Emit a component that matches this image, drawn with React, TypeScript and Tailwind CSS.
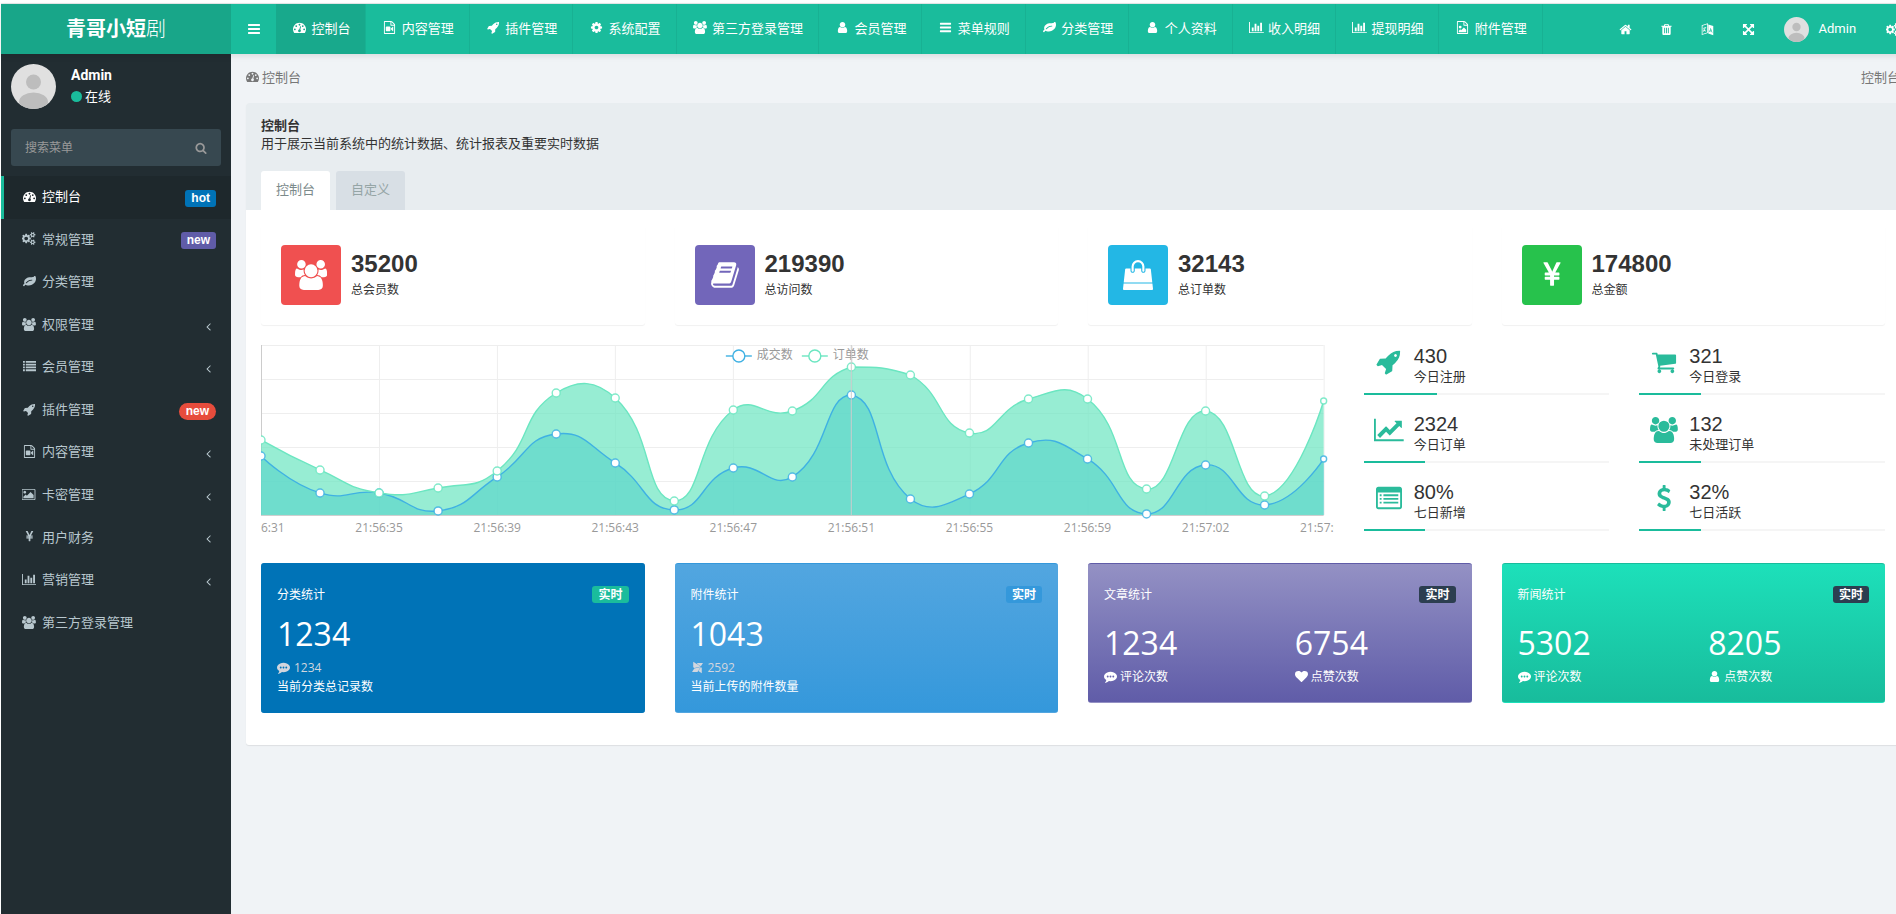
import React, { useState } from "react"
import { FaModx } from "react-icons/fa"

type Shape = { d: string; w?: number }

const barRow = "v128q0 26-19 45t-45 19h-1408q-26 0-45-19t-19-45v-128q0-26 19-45t45-19h1408q26 0 45 19t19 45z"
const dot = "q0-53-37.5-90.5t-90.5-37.5-90.5 37.5-37.5 90.5 37.5 90.5 90.5 37.5 90.5-37.5 37.5-90.5z"
const trashSlot = "v-704q0-14-9-23t-23-9h-64q-14 0-23 9t-9 23v704q0 14 9 23t23 9h64q14 0 23-9t9-23z"
const filePage =
  "M1596 380q28 28 48 76t20 88v1152q0 40-28 68t-68 28h-1344q-40 0-68-28t-28-68v-1600q0-40 28-68t68-28h896q40 0 88 20t76 48zm-444-244v376h376q-10-29-22-41l-313-313q-12-12-41-22zm384 1528v-1024h-416q-40 0-68-28t-28-68v-416h-768v1536h1280z"
const smallGear =
  "v140q0 16-149 31-12 27-30 52 51 113 51 138 0 4-4 7-122 71-124 71-8 0-46-47t-52-68q-20 2-30 2t-30-2q-14 21-52 68t-46 47q-2 0-124-71-4-3-4-7 0-25 51-138-18-25-30-52-149-15-149-31v-140q0-16 149-31 13-29 30-52-51-113-51-138 0-4 4-7 4-2 35-20t59-34 30-16q8 0 46 46.5t52 67.5q20-2 30-2t30 2q51-71 92-112l6-2q4 0 124 70 4 3 4 7 0 25-51 138 17 23 30 52 149 15 149 31z"

const icons = {
  dashboard: {
    d: `M384 1152${dot}M576 704${dot}M1004 1185l101-382q6-26-7.5-48.5t-38.5-29.5-48 6.5-30 39.5l-101 382q-60 5-107 43.5t-63 98.5q-20 77 20 146t117 89 146-20 89-117q16-60-6-117t-72-91zM1664 1152${dot}M1024 512${dot}M1472 704${dot}M1792 1152q0 261-141 483-19 29-54 29h-1402q-35 0-54-29-141-221-141-483 0-182 71-348t191-286 286-191 348-71 348 71 286 191 191 286 71 348z`,
  },
  group: {
    w: 1920,
    d: "M593 896q-162 5-265 128h-134q-82 0-138-40.5t-56-118.5q0-353 124-353 6 0 43.5 21t97.5 42.5 119 21.5q67 0 133-23-5 37-5 66 0 139 81 256zm1071 637q0 120-73 189.5t-194 69.5h-874q-121 0-194-69.5t-73-189.5q0-53 3.5-103.5t14-109 26.5-108.5 43-97.5 62-81 85.5-53.5 111.5-20q10 0 43 21.5t73 48 107 48 135 21.5 135-21.5 107-48 73-48 43-21.5q61 0 111.5 20t85.5 53.5 62 81 43 97.5 26.5 108.5 14 109 3.5 103.5zm-1024-1277q0 106-75 181t-181 75-181-75-75-181 75-181 181-75 181 75 75 181zm704 384q0 159-112.5 271.5t-271.5 112.5-271.5-112.5-112.5-271.5 112.5-271.5 271.5-112.5 271.5 112.5 112.5 271.5zm576 225q0 78-56 118.5t-138 40.5h-134q-103-123-265-128 81-117 81-256 0-29-5-66 66 23 133 23 59 0 119-21.5t97.5-42.5 43.5-21q124 0 124 353zm-128-609q0 106-75 181t-181 75-181-75-75-181 75-181 181-75 181 75 75 181z",
  },
  rocket: {
    d: "M1440 448q0-40-28-68t-68-28-68 28-28 68 28 68 68 28 68-28 28-68zm224-288q0 249-75.5 430.5t-253.5 360.5q-81 80-195 176l-20 379q-2 16-16 26l-384 224q-7 4-16 4-12 0-23-9l-64-64q-13-14-8-32l85-276-281-281-276 85q-3 1-9 1-14 0-23-9l-64-64q-17-19-5-39l224-384q10-14 26-16l379-20q96-114 176-195 188-187 358-258t431-71q14 0 24 9.5t10 22.5z",
  },
  user: {
    d: "M1536 1399q0 109-62.5 187t-150.5 78h-854q-88 0-150.5-78t-62.5-187q0-85 8.5-160.5t31.5-152 58.5-131 94-89 134.5-34.5q131 128 313 128t313-128q76 0 134.5 34.5t94 89 58.5 131 31.5 152 8.5 160.5zm-256-887q0 159-112.5 271.5t-271.5 112.5-271.5-112.5-112.5-271.5 112.5-271.5 271.5-112.5 271.5 112.5 112.5 271.5z",
  },
  bars: { d: `M1664 1344${barRow}M1664 832${barRow}M1664 320${barRow}` },
  list: {
    d: "M0 128h256v256h-256zM384 128h1408v256h-1408zM0 512h256v256h-256zM384 512h1408v256h-1408zM0 896h256v256h-256zM384 896h1408v256h-1408zM0 1280h256v256h-256zM384 1280h1408v256h-1408z",
  },
  listAlt: {
    d: "M160 128h1472q66 0 113 47t47 113v1216q0 66-47 113t-113 47h-1472q-66 0-113-47t-47-113v-1216q0-66 47-113t113-47zM128 512v992q0 32 32 32h1472q32 0 32-32v-992zM256 640h128v128h-128zM512 640h1024v128h-1024zM256 896h128v128h-128zM512 896h1024v128h-1024zM256 1152h128v128h-128zM512 1152h1024v128h-1024z",
  },
  leaf: {
    d: "M1280 704q0-26-19-45t-45-19q-172 0-318 49.5t-259.5 134-235.5 219.5q-19 21-19 45 0 26 19 45t45 19q24 0 45-19 27-24 74-71t67-66q137-124 268.5-176t313.5-52q26 0 45-19t19-45zm512-198q0 95-20 193-46 224-184.5 383t-357.5 268q-214 108-438 108-148 0-286-47-15-5-88-42t-96-37q-16 0-39.5 32t-45 70-52.5 70-60 32q-43 0-63.5-17.5t-45.5-59.5q-2-4-6-11t-5.5-10-3-9.5-1.5-13.5q0-35 31-73.5t68-65.5 68-56 31-48q0-4-14-38t-16-44q-9-51-9-104 0-115 43.5-220t119-184.5 170.5-139 204-95.5q55-18 145-25.5t179.5-9 178.5-6 163.5-24 113.5-56.5l29.5-29.5 29.5-28 27-20 36.5-16 43.5-4.5q39 0 70.5 46t47.5 112 24 124 8 96z",
  },
  cog: {
    d: "M1152 896q0-106-75-181t-181-75-181 75-75 181 75 181 181 75 181-75 75-181zm512-109v222q0 12-8 23t-20 13l-185 28q-19 54-39 91 35 50 107 138 10 12 10 25t-9 23q-27 37-99 108t-94 71q-12 0-26-9l-138-108q-44 23-91 38-16 136-29 186-7 28-36 28h-222q-14 0-24.5-8.5t-11.5-21.5l-28-184q-49-16-90-37l-141 107q-10 9-25 9-14 0-25-11-126-114-165-168-7-10-7-23 0-12 8-23 15-21 51-66.5t54-70.5q-27-50-41-99l-183-27q-13-2-21-12.5t-8-23.5v-222q0-12 8-23t19-13l186-28q14-46 39-92-40-57-107-138-10-12-10-24 0-10 9-23 26-36 98.5-107.5t94.5-71.5q13 0 26 10l138 107q44-23 91-38 16-136 29-186 7-28 36-28h222q14 0 24.5 8.5t11.5 21.5l28 184q49 16 90 37l142-107q9-9 24-9 13 0 25 10 129 119 165 170 7 8 7 22 0 12-8 23-15 21-51 66.5t-54 70.5q26 50 41 98l183 28q13 2 21 12.5t8 23.5z",
  },
  cogs: {
    w: 1920,
    d: `M832 896q0-106-75-181t-181-75-181 75-75 181 75 181 181 75 181-75 75-181zM1600 1408q0-52-38-90t-90-38-90 38-38 90q0 53 37.5 90.5t90.5 37.5 90.5-37.5 37.5-90.5zM1600 384q0-52-38-90t-90-38-90 38-38 90q0 53 37.5 90.5t90.5 37.5 90.5-37.5 37.5-90.5zM1216 805v185q0 10-7 19.5t-16 10.5l-155 24q-11 35-32 76 34 48 90 115 7 11 7 20 0 12-7 19-23 30-82.5 89.5t-78.5 59.5q-11 0-21-7l-115-90q-37 19-77 31-11 108-23 155-7 24-30 24h-186q-11 0-20-7.5t-10-17.5l-23-153q-34-10-75-31l-118 89q-7 7-20 7-11 0-21-8-144-133-144-160 0-9 7-19 10-14 41-53t47-61q-23-44-35-82l-152-24q-10-1-17-9.5t-7-19.5v-185q0-10 7-19.5t16-10.5l155-24q11-35 32-76-34-48-90-115-7-11-7-20 0-12 7-20 22-30 82-89t79-59q11 0 21 7l115 90q34-18 77-32 11-108 23-154 7-24 30-24h186q11 0 20 7.5t10 17.5l23 153q34 10 75 31l118-89q8-7 20-7 11 0 21 8 144 133 144 160 0 8-7 19-12 16-42 54t-45 60q23 48 34 82l152 23q10 2 17 10.5t7 19.5zM1856 1338${smallGear}M1856 314${smallGear}`,
  },
  barChart: {
    w: 2048,
    d: "M640 896v512h-256v-512h256zm384-512v1024h-256v-1024h256zm1024 1152v128h-2048v-1536h128v1408h1920zm-640-896v768h-256v-768h256zm384-384v1152h-256v-1152h256z",
  },
  lineChart: {
    w: 2048,
    d: "M2048 1536v128h-2048v-1536h128v1408h1920zm-128-1248v435q0 21-19.5 29.5t-35.5-7.5l-121-121-633 633q-10 10-23 10t-23-10l-233-233-416 416-192-192 585-585q10-10 23-10t23 10l233 233 464-464-121-121q-16-16-7.5-35.5t29.5-19.5h435q14 0 23 9t9 23z",
  },
  cart: {
    d: "M704 1536q0 52-38 90t-90 38-90-38-38-90 38-90 90-38 90 38 38 90zm896 0q0 52-38 90t-90 38-90-38-38-90 38-90 90-38 90 38 38 90zm128-1088v512q0 24-16.5 42.5t-40.5 21.5l-1044 122q13 60 13 70 0 16-24 64h920q26 0 45 19t19 45-19 45-45 19h-1024q-26 0-45-19t-19-45q0-11 8-31.5t16-36 21.5-40 15.5-29.5l-177-823h-204q-26 0-45-19t-19-45 19-45 45-19h256q16 0 28.5 6.5t19.5 15.5 13 24.5 8 26 5.5 29.5 4.5 26h1201q26 0 45 19t19 45z",
  },
  commenting: {
    d: `M640 896${dot}M1024 896${dot}M1408 896${dot}M1792 896q0 174-120 321.5t-326 233-450 85.5q-110 0-211-18-173 173-435 229-52 10-86 13-12 1-22-6t-13-18q-4-15 20-37 5-5 23.5-21.5t25.5-23.5 23.5-25.5 24-31.5 20.5-37 20-48 14.5-57.5 12.5-72.5q-146-90-229.5-216.5t-83.5-269.5q0-174 120-321.5t326-233 450-85.5 450 85.5 326 233 120 321.5z`,
  },
  heart: {
    d: "M896 1664q-26 0-44-18l-624-602q-10-8-27.5-26t-55.5-65.5-68-97.5-53.5-121-23.5-138q0-220 127-344t351-124q62 0 126.5 21.5t120 58 95.5 68.5 76 68q36-36 76-68t95.5-68.5 120-58 126.5-21.5q224 0 351 124t127 344q0 221-229 450l-623 600q-18 18-44 18z",
  },
  search: {
    d: "M1216 832q0-185-131.5-316.5t-316.5-131.5-316.5 131.5-131.5 316.5 131.5 316.5 316.5 131.5 316.5-131.5 131.5-316.5zm512 832q0 52-38 90t-90 38q-54 0-90-38l-343-342q-179 124-399 124-143 0-273.5-55.5t-225-150-150-225-55.5-273.5 55.5-273.5 150-225 225-150 273.5-55.5 273.5 55.5 225 150 150 225 55.5 273.5q0 220-124 399l343 343q37 37 37 90z",
  },
  home: {
    d: "M1472 992v480q0 26-19 45t-45 19h-384v-384h-256v384h-384q-26 0-45-19t-19-45v-480q0-1 .5-3t.5-3l575-474 575 474q1 2 1 6zm223-69l-62 74q-8 9-21 11h-3q-13 0-21-7l-692-577-692 577q-12 8-24 7-13-2-21-11l-62-74q-8-10-7-23.5t11-21.5l719-599q32-26 76-26t76 26l244 204v-195q0-14 9-23t23-9h192q14 0 23 9t9 23v408l219 182q10 8 11 21.5t-7 23.5z",
  },
  trash: {
    d: `M704 1376${trashSlot}M960 1376${trashSlot}M1216 1376${trashSlot}M672 384h448l-48-117q-7-9-17-11h-317q-10 2-17 11zM1600 416v64q0 14-9 23t-23 9h-96v948q0 83-47 143.5t-113 60.5h-832q-66 0-113-58.5t-47-141.5v-952h-96q-14 0-23-9t-9-23v-64q0-14 9-23t23-9h309l70-167q15-37 54-63t79-26h320q40 0 79 26t54 63l70 167h309q14 0 23 9t9 23z`,
  },
  language: {
    d: "M100 300l850-280v1360l-850 290zM210 390v1130l630-215v-1130zM1000 190l690 230v1270l-690-250zM290 700l420-140v110l-90 30q-10 160-110 290l190 70v120l-270-90-110 120-60-80 90-90-70-120 90-30 50 80q80-120 90-240l-220 75zM1330 640l-190 560 90 30 40-110 190 60 40 130 90 30zM1330 830l80 250-110-35z",
  },
  expand: {
    d: "M1411 541l-355 355 355 355 144-144q29-31 70-14 39 17 39 59v448q0 26-19 45t-45 19h-448q-42 0-59-40-17-39 14-69l144-144-355-355-355 355 144 144q31 30 14 69-17 40-59 40h-448q-26 0-45-19t-19-45v-448q0-42 40-59 39-17 69 14l144 144 355-355-355-355-144 144q-19 19-45 19-12 0-24-5-40-17-40-59v-448q0-26 19-45t45-19h448q42 0 59 40 17 39-14 69l-144 144 355 355 355-355-144-144q-31-30-14-69 17-40 59-40h448q26 0 45 19t19 45v448q0 42-39 59-13 5-25 5-26 0-45-19z",
  },
  yen: {
    d: "M985.5 1536h-172q-13 0-22.5-9t-9.5-23v-330h-288q-13 0-22.5-9t-9.5-23v-103q0-13 9.5-22.5t22.5-9.5h288v-85h-288q-13 0-22.5-9t-9.5-23v-104q0-13 9.5-22.5t22.5-9.5h214l-321-578q-8-16 0-32 10-16 28-16h194q19 0 29 18l215 425q19 38 56 125 10-24 30.5-68t27.5-61l191-420q8-19 29-19h191q17 0 27 16 9 14 1 31l-313 579h215q13 0 22.5 9.5t9.5 22.5v104q0 14-9.5 23t-22.5 9h-290v85h290q13 0 22.5 9.5t9.5 22.5v103q0 14-9.5 23t-22.5 9h-290v330q0 13-9.5 22.5t-22.5 9.5z",
  },
  dollar: {
    d: "M1362 1185q0 153-99.5 263.5t-258.5 136.5v175q0 14-9 23t-23 9h-135q-13 0-22.5-9.5t-9.5-22.5v-175q-66-9-127.5-31t-101.5-44.5-74-48-46.5-37.5-17.5-18q-17-21-2-41l103-135q7-10 23-12 15-2 24 9l2 2q113 99 243 125 37 8 74 8 81 0 142.5-43t61.5-122q0-28-15-53t-33.5-42-58.5-37.5-66-32-80-32.5q-39-16-61.5-25t-61.5-26.5-62.5-31-56.5-35.5-53.5-42.5-43.5-49-35.5-58-21-66.5-8.5-78q0-138 98-242t255-134v-180q0-13 9.5-22.5t22.5-9.5h135q14 0 23 9t9 23v176q57 6 110.5 23t87 33.5 63.5 37.5 39 29 15 14q17 18 5 38l-81 146q-8 15-23 16-14 3-27-7-3-3-14.5-12t-39-26.5-58.5-32-74.5-26-85.5-11.5q-95 0-155 43t-60 111q0 26 8.5 48t29.5 41.5 39.5 33 56 31 60.5 27 70 27.5q53 20 81 31.5t76 35 75.5 42.5 62 50 53 63.5 31.5 76.5 13 94z",
  },
  bag: {
    d: "M1757 1408l35 313q3 28-16 50-19 21-48 21h-1664q-29 0-48-21-19-22-16-50l35-313h1722zm-93-839l86 775h-1708l86-775q3-24 21-40.5t43-16.5h256v128q0 53 37.5 90.5t90.5 37.5 90.5-37.5 37.5-90.5v-128h384v128q0 53 37.5 90.5t90.5 37.5 90.5-37.5 37.5-90.5v-128h256q25 0 43 16.5t21 40.5zm-384-185v256q0 26-19 45t-45 19-45-19-19-45v-256q0-106-75-181t-181-75-181 75-75 181v256q0 26-19 45t-45 19-45-19-19-45v-256q0-159 112.5-271.5t271.5-112.5 271.5 112.5 112.5 271.5z",
  },
  book: {
    d: "M1703 478q40 57 18 129l-275 906q-19 64-76.5 107.5t-122.5 43.5h-923q-77 0-148.5-53.5t-99.5-131.5q-24-67-2-127 0-4 3-27t4-37q1-8-3-21.5t-3-19.5q2-11 8-21t16.5-23.5 16.5-23.5q23-38 45-91.5t30-91.5q3-10 .5-30t-.5-28q3-11 17-28t17-23q21-36 42-92t25-90q1-9-2.5-32t.5-28q4-13 22-30.5t22-22.5q19-26 42.5-84.5t27.5-96.5q1-8-3-25.5t-2-26.5q2-8 9-18t18-23 17-21q8-12 16.5-30.5t15-35 16-36 19.5-32 26.5-23.5 36-11.5 47.5 5.5l-1 3q38-9 51-9h761q74 0 114 56t18 130l-274 906q-36 119-71.5 153.5t-128.5 34.5h-869q-27 0-38 15-11 16-1 43 24 70 144 70h923q29 0 56-15.5t35-41.5l300-987q7-22 5-57 38 15 59 43zm-1064 2q-4 13 2 22.5t20 9.5h608q13 0 25.5-9.5t16.5-22.5l21-64q4-13-2-22.5t-20-9.5h-608q-13 0-25.5 9.5t-16.5 22.5zm-83 256q-4 13 2 22.5t20 9.5h608q13 0 25.5-9.5t16.5-22.5l21-64q4-13-2-22.5t-20-9.5h-608q-13 0-25.5 9.5t-16.5 22.5z",
  },
  angleLeft: {
    d: "M1203 544q0 13-10 23l-393 393 393 393q10 10 10 23t-10 23l-50 50q-10 10-23 10t-23-10l-466-466q-10-10-10-23t10-23l466-466q10-10 23-10t23 10l50 50q10 10 10 23z",
  },
  picture: {
    w: 1920,
    d: "M576 576q0 80-56 136t-136 56-136-56-56-136 56-136 136-56 136 56 56 136zm1024 384v448h-1408v-192l320-320 160 160 512-512zm96-704h-1600q-13 0-22.5 9.5t-9.5 22.5v1216q0 13 9.5 22.5t22.5 9.5h1600q13 0 22.5-9.5t9.5-22.5v-1216q0-13-9.5-22.5t-22.5-9.5zm160 32v1216q0 66-47 113t-113 47h-1600q-66 0-113-47t-47-113v-1216q0-66 47-113t113-47h1600q66 0 113 47t47 113z",
  },
  fileImage: {
    d: `${filePage}M1408 1216v320h-1024v-192l192-192 128 128 384-384zM576 1024q-80 0-136-56t-56-136 56-136 136-56 136 56 56 136-56 136-136 56z`,
  },
  fileVideo: {
    d: `${filePage}M896 768q52 0 90 38t38 90v384q0 52-38 90t-90 38h-384q-52 0-90-38t-38-90v-384q0-52 38-90t90-38h384zM1388 770q20 8 20 30v576q0 22-20 30-8 2-12 2-14 0-23-9l-265-266v-90l265-266q9-9 23-9 4 0 12 2z`,
  },
} satisfies Record<string, Shape>

type IconName = keyof typeof icons

function Icon({ name, className = "h-[13px]" }: { name: IconName; className?: string }) {
  const shape: Shape = icons[name]
  return (
    <svg viewBox={`0 0 ${shape.w ?? 1792} 1792`} className={`${className} w-auto shrink-0`} fill="currentColor" fillRule="evenodd" aria-hidden="true">
      <path d={shape.d} />
    </svg>
  )
}

function Avatar({ className }: { className: string }) {
  return (
    <svg viewBox="0 0 45 45" className={`${className} shrink-0 rounded-full`} aria-hidden="true">
      <rect width="45" height="45" fill="#e0e0e0" />
      <circle cx="22.5" cy="18" r="7.5" fill="#bdbdbd" />
      <ellipse cx="22.5" cy="38" rx="14.5" ry="9.5" fill="#bdbdbd" />
    </svg>
  )
}

const navItems: { icon: IconName; label: string }[] = [
  { icon: "dashboard", label: "控制台" },
  { icon: "fileVideo", label: "内容管理" },
  { icon: "rocket", label: "插件管理" },
  { icon: "cog", label: "系统配置" },
  { icon: "group", label: "第三方登录管理" },
  { icon: "user", label: "会员管理" },
  { icon: "bars", label: "菜单规则" },
  { icon: "leaf", label: "分类管理" },
  { icon: "user", label: "个人资料" },
  { icon: "barChart", label: "收入明细" },
  { icon: "barChart", label: "提现明细" },
  { icon: "fileImage", label: "附件管理" },
]

const menuItems: { icon: IconName; label: string; badge?: string; badgeClass?: string; arrow?: boolean }[] = [
  { icon: "dashboard", label: "控制台", badge: "hot", badgeClass: "rounded-[3px] bg-[#0073b7] px-[6px]" },
  { icon: "cogs", label: "常规管理", badge: "new", badgeClass: "rounded-[3px] bg-[#605ca8] px-[6px]" },
  { icon: "leaf", label: "分类管理" },
  { icon: "group", label: "权限管理", arrow: true },
  { icon: "list", label: "会员管理", arrow: true },
  { icon: "rocket", label: "插件管理", badge: "new", badgeClass: "rounded-full bg-[#e74c3c] px-[7px]" },
  { icon: "fileVideo", label: "内容管理", arrow: true },
  { icon: "picture", label: "卡密管理", arrow: true },
  { icon: "yen", label: "用户财务", arrow: true },
  { icon: "barChart", label: "营销管理", arrow: true },
  { icon: "group", label: "第三方登录管理" },
]

const tools: { icon: IconName; title: string }[] = [
  { icon: "home", title: "主页" },
  { icon: "trash", title: "清除缓存" },
  { icon: "language", title: "语言" },
  { icon: "expand", title: "全屏" },
]

const stats: { icon: IconName; value: string; label: string; color: string }[] = [
  { icon: "group", value: "35200", label: "总会员数", color: "bg-[#f05050]" },
  { icon: "book", value: "219390", label: "总访问数", color: "bg-[#7266ba]" },
  { icon: "bag", value: "32143", label: "总订单数", color: "bg-[#23b7e5]" },
  { icon: "yen", value: "174800", label: "总金额", color: "bg-[#27c24c]" },
]

const miniStats: { icon: IconName; value: string; label: string; percent: number }[] = [
  { icon: "rocket", value: "430", label: "今日注册", percent: 30 },
  { icon: "cart", value: "321", label: "今日登录", percent: 25 },
  { icon: "lineChart", value: "2324", label: "今日订单", percent: 25 },
  { icon: "group", value: "132", label: "未处理订单", percent: 25 },
  { icon: "listAlt", value: "80%", label: "七日新增", percent: 25 },
  { icon: "dollar", value: "32%", label: "七日活跃", percent: 25 },
]

const times = ["21:56:31", "21:56:35", "21:56:39", "21:56:43", "21:56:47", "21:56:51", "21:56:55", "21:56:59", "21:57:02", "21:57:06"]

// distance from the top of the plot, one entry per sample
const orders = [95, 125, 148, 143, 126, 48, 53, 156, 65, 66, 22, 30, 88, 54, 54, 144, 66, 151, 56]
const deals = [111, 148, 148, 166, 132, 89, 118, 165, 123, 132, 50, 154, 149, 98, 114, 169, 120, 160, 114]

const STEP = 1063 / 18
const BOTTOM = 170

function smoothPath(values: number[]) {
  const pts = values.map((y, i) => [i * STEP, y])
  const top = Math.min(...values)
  const low = Math.max(...values)
  const clamp = (y: number) => Math.max(top, Math.min(low, y))
  let d = `M${pts[0][0]} ${pts[0][1]}`
  let cp0 = pts[0]
  for (let i = 1; i < pts.length; i++) {
    const [x, y] = pts[i]
    const prev = pts[i - 1]
    const next = pts[i + 1]
    let cp1 = [x, y]
    let after = [x, y]
    if (next) {
      const lenPrev = Math.hypot(x - prev[0], y - prev[1])
      const lenNext = Math.hypot(next[0] - x, next[1] - y)
      const ratio = lenNext / (lenNext + lenPrev)
      const vx = next[0] - prev[0]
      const vy = next[1] - prev[1]
      cp1 = [x - vx * 0.5 * (1 - ratio), clamp(y - vy * 0.5 * (1 - ratio))]
      after = [x + vx * 0.5 * ratio, clamp(y + vy * 0.5 * ratio)]
    }
    d += `C${cp0[0]} ${cp0[1]} ${cp1[0]} ${cp1[1]} ${x} ${y}`
    cp0 = after
  }
  return d
}

const series = [
  { name: "成交数", values: deals, color: "#3fb1e3", legendX: 478 },
  { name: "订单数", values: orders, color: "#6be6c1", legendX: 554 },
]

function OrderChart() {
  return (
    <svg viewBox="0 0 1073 190" className="block w-full text-[12px]" fontFamily='"Open Sans", "Noto Sans CJK SC", sans-serif' role="img" aria-label="成交数 订单数">
      <g stroke="#eee">
        {[0, 1, 2, 3, 4].map((i) => (
          <line key={i} x1="0" x2="1063" y1={i * 34 + 0.5} y2={i * 34 + 0.5} />
        ))}
        {times.map((t, i) => (
          <line key={t} x1={Math.round(i * 2 * STEP) + 0.5} x2={Math.round(i * 2 * STEP) + 0.5} y1="0" y2={BOTTOM} />
        ))}
      </g>
      <line x1="0.5" x2="0.5" y1="0" y2={BOTTOM} stroke="#ccc" />
      {series.map((s) => (
        <path key={s.name} d={`${smoothPath(s.values)}L1063 ${BOTTOM}L0 ${BOTTOM}Z`} fill={s.color} fillOpacity="0.7" />
      ))}
      <line x1="0" x2="1063" y1={BOTTOM + 0.5} y2={BOTTOM + 0.5} stroke="#ccc" />
      {series.map((s) => (
        <g key={s.name} stroke={s.color} strokeWidth="1.4">
          <path d={smoothPath(s.values)} fill="none" />
          {s.values.map((y, i) => (
            <circle key={i} cx={i * STEP} cy={y} r={i === 18 ? 3 : 4} fill="#fff" strokeOpacity="0.85" />
          ))}
        </g>
      ))}
      {series.map((s) => (
        <g key={s.name}>
          <line x1={s.legendX - 13} x2={s.legendX + 13} y1="11" y2="11" stroke={s.color} strokeWidth="1.4" />
          <circle cx={s.legendX} cy="11" r="6" fill="#fff" stroke={s.color} strokeWidth="1.4" />
          <text x={s.legendX + 18} y="14" fill="#999">
            {s.name}
          </text>
        </g>
      ))}
      <line x1="590.5" x2="590.5" y1="0" y2={BOTTOM} stroke="#ccc" />
      {times.map((t, i) => (
        <text key={t} x={i * 2 * STEP} y="187" fill="#999" textAnchor="middle">
          {t}
        </text>
      ))}
    </svg>
  )
}

function StatCard({ title, tagClass, className, children }: { title: string; tagClass: string; className: string; children: React.ReactNode }) {
  return (
    <section className={`rounded-[3px] border-y px-4 text-white ${className}`}>
      <div className="flex items-center justify-between pt-[22px]">
        <h5 className="text-xs leading-[17px]">{title}</h5>
        <span className={`rounded-[3px] px-[6px] text-xs leading-[17px] font-bold ${tagClass}`}>实时</span>
      </div>
      {children}
    </section>
  )
}

function Pair({ value, icon, label }: { value: string; icon: IconName; label: string }) {
  return (
    <div>
      <div className="text-[32px] leading-[40px]">{value}</div>
      <div className="mt-[5px] flex items-center gap-[3px] text-xs leading-[17px]">
        <Icon name={icon} />
        {label}
      </div>
    </div>
  )
}

export default function App() {
  const [keyword, setKeyword] = useState<string>("")
  const [tab, setTab] = useState<number>(0)

  return (
    <div className="min-h-screen overflow-hidden bg-white pt-[3px] pl-px font-['Open_Sans','Noto_Sans_CJK_SC',sans-serif] text-[13px] leading-[18px] text-[#333]">
      <div className="-mr-[19px] flex min-h-[calc(100vh-3px)] flex-col border-t border-[#e6e9ea]">
        {/* Top bar */}
        <header className="relative flex h-[50px] shrink-0 bg-[#1abc9c] text-white shadow-[0_2px_6px_rgba(0,0,0,0.1)]">
          <a href="#" className="flex w-[230px] items-center justify-center bg-[#18a689] text-xl">
            <b>青哥小短</b>
            <span className="font-light">剧</span>
          </a>
          <button type="button" aria-label="切换菜单" className="flex w-[45px] items-center justify-center">
            <Icon name="bars" className="h-[14px]" />
          </button>
          <nav className="flex">
            {navItems.map((item, idx) => (
              <a
                key={item.label}
                href="#"
                className={`flex items-center border-r border-[#18b193] px-[15px] pb-[3px] whitespace-nowrap ${idx === 0 ? "bg-[#18a98c]" : ""}`}
              >
                <span className="flex w-[17px] justify-center">
                  <Icon name={item.icon} />
                </span>
                <span>&nbsp;{item.label}</span>
              </a>
            ))}
          </nav>
          <div className="ml-auto flex">
            {tools.map((tool) => (
              <button key={tool.icon} type="button" aria-label={tool.title} className="flex w-[41px] items-center justify-center">
                <Icon name={tool.icon} />
              </button>
            ))}
            <a href="#" className="flex items-center gap-[10px] px-[15px] font-['Roboto',sans-serif]">
              <Avatar className="size-[25px]" />
              Admin
            </a>
            <button type="button" aria-label="设置" className="flex items-center px-[15px]">
              <Icon name="cogs" />
            </button>
          </div>
        </header>

        <div className="flex flex-1">
          {/* Sidebar */}
          <aside className="w-[230px] shrink-0 bg-[#222d32]">
            <div className="flex gap-[15px] p-[10px] text-white">
              <Avatar className="size-[45px]" />
              <div>
                <p className="mt-[2px] font-['Roboto',sans-serif] text-sm leading-[18px] font-bold">Admin</p>
                <a href="#" className="mt-[3px] flex items-center gap-[3px]">
                  <span className="size-[11px] rounded-full bg-[#1abc9c]" />
                  在线
                </a>
              </div>
            </div>
            <form className="m-[10px] flex h-[37px] items-center rounded-[3px] bg-[#374850] px-[14px] text-[#999]" onSubmit={(e) => e.preventDefault()}>
              <input
                type="text"
                aria-label="搜索菜单"
                placeholder="搜索菜单"
                value={keyword}
                onChange={(e) => setKeyword(e.target.value)}
                className="min-w-0 flex-1 bg-transparent text-xs outline-none placeholder:text-[#999]"
              />
              <button type="submit" aria-label="搜索">
                <Icon name="search" className="h-[12px]" />
              </button>
            </form>
            <nav className="leading-[1.43] text-[#b8c7ce]">
              {menuItems.map((item, idx) => (
                <a
                  key={item.label}
                  href="#"
                  className={`flex items-center border-l-[3px] px-[15px] pt-[11px] pb-[13px] ${idx === 0 ? "border-[#1abc9c] bg-[#1e282c] text-white" : "border-transparent"}`}
                >
                  <span className="mr-[3px] flex w-5 justify-center">
                    <Icon name={item.icon} />
                  </span>
                  {item.label}
                  {item.badge && (
                    <span className={`mt-0.5 -mb-0.5 ml-auto font-['Liberation_Sans',sans-serif] text-xs leading-[17px] font-bold text-white ${item.badgeClass}`}>
                      {item.badge}
                    </span>
                  )}
                  {item.arrow && (
                    <span className="mt-1 ml-auto flex w-[15px] justify-center">
                      <Icon name="angleLeft" />
                    </span>
                  )}
                </a>
              ))}
            </nav>
          </aside>

          {/* Content */}
          <div className="min-w-0 flex-1 bg-[#f0f3f6]">
            <div className="flex h-[49px] items-center justify-between px-[15px] pb-[4px] text-[#777]">
              <a href="#" className="flex items-center gap-[3px]">
                <Icon name="dashboard" />
                控制台
              </a>
              <span>控制台</span>
            </div>

            <main className="mx-[15px] rounded-[3px] bg-white shadow-[0_1px_1px_rgba(0,0,0,0.08)]">
              <div className="rounded-t-[3px] bg-[#e8edf0] px-[15px] pt-[13px]">
                <h1 className="font-bold">控制台</h1>
                <p>用于展示当前系统中的统计数据、统计报表及重要实时数据</p>
                <div className="mt-[19px] flex gap-[6px]">
                  {["控制台", "自定义"].map((name, idx) => (
                    <button
                      key={name}
                      type="button"
                      onClick={() => setTab(idx)}
                      className={`h-[39px] rounded-t-[3px] px-[15px] pb-[4px] ${tab === idx ? "bg-white text-[#7b8a8b]" : "bg-[#d8dfe5] text-[#95a5a6]"}`}
                    >
                      {name}
                    </button>
                  ))}
                </div>
              </div>

              <div className="p-[15px] pb-8">
                <div className="grid grid-cols-4 gap-[30px]">
                  {stats.map((stat) => (
                    <div key={stat.label} className="flex gap-[10px] rounded-[3px] p-5 shadow-[0_1px_1px_rgba(0,0,0,0.06)]">
                      <div className={`flex size-[60px] items-center justify-center rounded ${stat.color} text-white`}>
                        <Icon name={stat.icon} className="h-[30px]" />
                      </div>
                      <div className="pt-[5px]">
                        <div className="font-['Liberation_Sans',sans-serif] text-2xl leading-[28px] font-bold">{stat.value}</div>
                        <div className="mt-[3px] text-xs leading-[18px]">{stat.label}</div>
                      </div>
                    </div>
                  ))}
                </div>

                <div className="mt-5 grid grid-cols-12 gap-[30px]">
                  <div className="col-span-8">
                    <OrderChart />
                  </div>
                  <div className="col-span-4 grid grid-cols-2 content-start gap-x-[30px] gap-y-[18px]">
                    {miniStats.map((item) => (
                      <div key={item.label}>
                        <div className="flex">
                          <div className="flex w-[50px] items-center justify-center pb-[6px] text-[#2abb9b]">
                            <Icon name={item.icon} className="h-[26px]" />
                          </div>
                          <div>
                            <div className="font-['Liberation_Sans',sans-serif] text-xl leading-[23px]">{item.value}</div>
                            <div className="leading-[17px]">{item.label}</div>
                          </div>
                        </div>
                        <div className="mt-[8px] h-[2px] bg-[#f5f5f5]">
                          <div className="h-full bg-[#1abc9c]" style={{ width: `${item.percent}%` }} />
                        </div>
                      </div>
                    ))}
                  </div>
                </div>

                <div className="mt-7 grid grid-cols-4 items-start gap-[30px]">
                  <StatCard title="分类统计" tagClass="bg-[#1abc9c]" className="border-[#0073b7] bg-[#0073b7] pb-[16px]">
                    <div className="mt-[11px] text-[32px] leading-[40px]">1234</div>
                    <div className="mt-[5px] flex items-center gap-1 text-xs leading-[18px] text-[#d2d6de]">
                      <Icon name="commenting" />
                      1234
                    </div>
                    <div className="text-xs leading-[19px]">当前分类总记录数</div>
                  </StatCard>
                  <StatCard title="附件统计" tagClass="bg-[#3498db]" className="border-t-[#3498db] border-b-[#52a6e0] bg-linear-to-b from-[#52a6e0] to-[#3498db] pb-[16px]">
                    <div className="mt-[11px] text-[32px] leading-[40px]">1043</div>
                    <div className="mt-[5px] flex items-center gap-1 text-xs leading-[18px] text-[#d2d6de]">
                      <FaModx className="size-[13px]" />
                      2592
                    </div>
                    <div className="text-xs leading-[19px]">当前上传的附件数量</div>
                  </StatCard>
                  <StatCard title="文章统计" tagClass="bg-[#2c3e50]" className="border-t-[#605ca8] border-b-[#9491c4] bg-linear-to-b from-[#9491c4] to-[#605ca8] pb-[17px]">
                    <div className="mt-5 grid grid-cols-2 gap-[30px]">
                      <Pair value="1234" icon="commenting" label="评论次数" />
                      <Pair value="6754" icon="heart" label="点赞次数" />
                    </div>
                  </StatCard>
                  <StatCard title="新闻统计" tagClass="bg-[#2c3e50]" className="border-t-[#18bc9c] border-b-[#1de0ba] bg-linear-to-b from-[#1de0ba] to-[#18bc9c] pb-[17px]">
                    <div className="mt-5 grid grid-cols-2 gap-[30px]">
                      <Pair value="5302" icon="commenting" label="评论次数" />
                      <Pair value="8205" icon="user" label="点赞次数" />
                    </div>
                  </StatCard>
                </div>
              </div>
            </main>
          </div>
        </div>
      </div>
    </div>
  )
}
